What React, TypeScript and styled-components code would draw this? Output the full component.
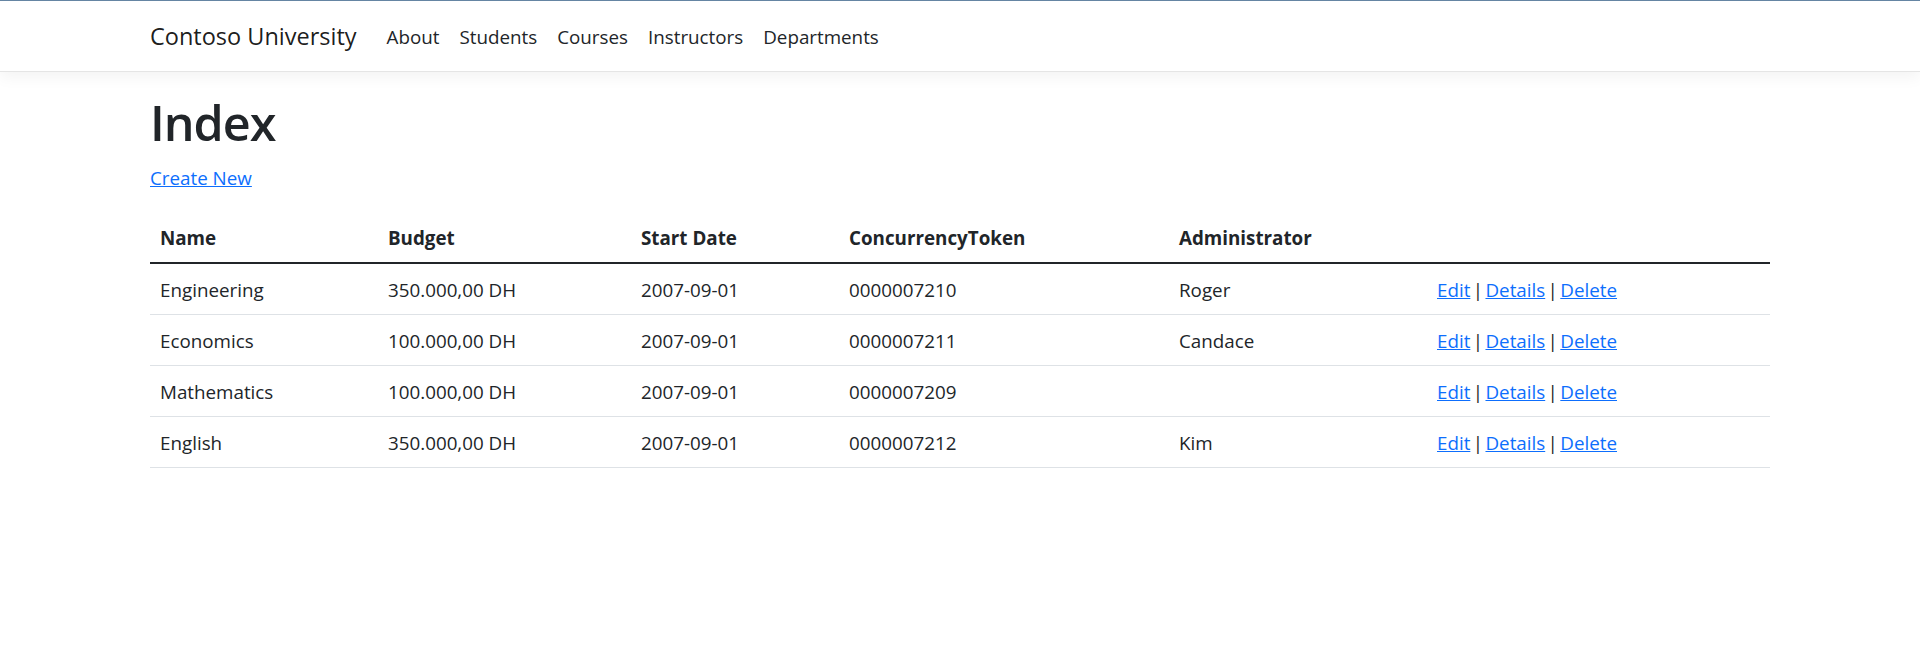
import React from 'react'
import styled, { createGlobalStyle } from 'styled-components'

// Stand-in for Segoe UI (not installed in the sandbox); Open Sans runs a bit
// wider, so the sizes are trimmed to keep the same text widths.
const FONT = `"Segoe UI", "Open Sans", "Liberation Sans", sans-serif`

const GlobalStyle = createGlobalStyle`
  html, body {
    margin: 0;
    padding: 0;
    background: #fff;
  }
  body {
    font-family: ${FONT};
    font-size: 18.8px;
    line-height: 30px;
    color: #212529;
    border-top: 1px solid #6585a3;
  }
  * {
    box-sizing: border-box;
  }
`

const Navbar = styled.header`
  background: #fff;
  border-bottom: 1px solid #e5e5e5;
  box-shadow: 0 5px 15px rgba(0, 0, 0, 0.05);
  margin-bottom: 20px;
`

const Container = styled.div`
  max-width: 1650px;
  margin: 0 auto;
  padding: 0 15px;
`

const NavInner = styled(Container)`
  display: flex;
  align-items: center;
  height: 70px;
`

const Brand = styled.a`
  font-size: 23.5px;
  line-height: 36px;
  color: rgba(0, 0, 0, 0.9);
  text-decoration: none;
  margin-right: 20px;
  white-space: nowrap;
`

const NavList = styled.nav`
  display: flex;
`

const NavLink = styled.a`
  padding: 11px 10px 9px;
  color: #212529;
  text-decoration: none;
`

const Title = styled.h1`
  font-size: 48.5px;
  font-weight: 600;
  letter-spacing: -1px;
  line-height: 60px;
  margin: 0 0 10px;
`

const Para = styled.p`
  margin: 0 0 19px;
  padding-top: 1px;
`

const Link = styled.a`
  color: #0d6efd;
  text-decoration: underline;
`

const Table = styled.table`
  width: 100%;
  table-layout: fixed;
  border-collapse: collapse;
  margin-bottom: 20px;
`

const HeadCell = styled.th`
  text-align: left;
  font-weight: 700;
  padding: 11px 10px 9px;
  border-bottom: 2px solid #212529;
`

const Cell = styled.td<{ $actions?: boolean }>`
  padding: 11px 10px 9px;
  border-bottom: 1px solid #dee2e6;
  white-space: nowrap;
  word-spacing: ${(p) => (p.$actions ? '-2.5px' : 'normal')};
`

const columns = [228, 253, 208, 330, 258, 343]

const departments = [
  { name: 'Engineering', budget: '350.000,00 DH', start: '2007-09-01', token: '0000007210', admin: 'Roger' },
  { name: 'Economics', budget: '100.000,00 DH', start: '2007-09-01', token: '0000007211', admin: 'Candace' },
  { name: 'Mathematics', budget: '100.000,00 DH', start: '2007-09-01', token: '0000007209', admin: '' },
  { name: 'English', budget: '350.000,00 DH', start: '2007-09-01', token: '0000007212', admin: 'Kim' },
]

const App: React.FC = () => (
  <>
    <GlobalStyle />
    <Navbar>
      <NavInner>
        <Brand href="#">Contoso University</Brand>
        <NavList>
          {['About', 'Students', 'Courses', 'Instructors', 'Departments'].map((item) => (
            <NavLink key={item} href="#">
              {item}
            </NavLink>
          ))}
        </NavList>
      </NavInner>
    </Navbar>

    <Container>
      <Title>Index</Title>
      <Para>
        <Link href="#">Create New</Link>
      </Para>

      <Table>
        <colgroup>
          {columns.map((w, i) => (
            <col key={i} style={{ width: w }} />
          ))}
        </colgroup>
        <thead>
          <tr>
            <HeadCell>Name</HeadCell>
            <HeadCell>Budget</HeadCell>
            <HeadCell>Start Date</HeadCell>
            <HeadCell>ConcurrencyToken</HeadCell>
            <HeadCell>Administrator</HeadCell>
            <HeadCell />
          </tr>
        </thead>
        <tbody>
          {departments.map((d) => (
            <tr key={d.token}>
              <Cell>{d.name}</Cell>
              <Cell>{d.budget}</Cell>
              <Cell>{d.start}</Cell>
              <Cell>{d.token}</Cell>
              <Cell>{d.admin}</Cell>
              <Cell $actions>
                <Link href="#">Edit</Link> |{' '}
                <Link href="#">Details</Link> |{' '}
                <Link href="#">Delete</Link>
              </Cell>
            </tr>
          ))}
        </tbody>
      </Table>
    </Container>
  </>
)

export default App
